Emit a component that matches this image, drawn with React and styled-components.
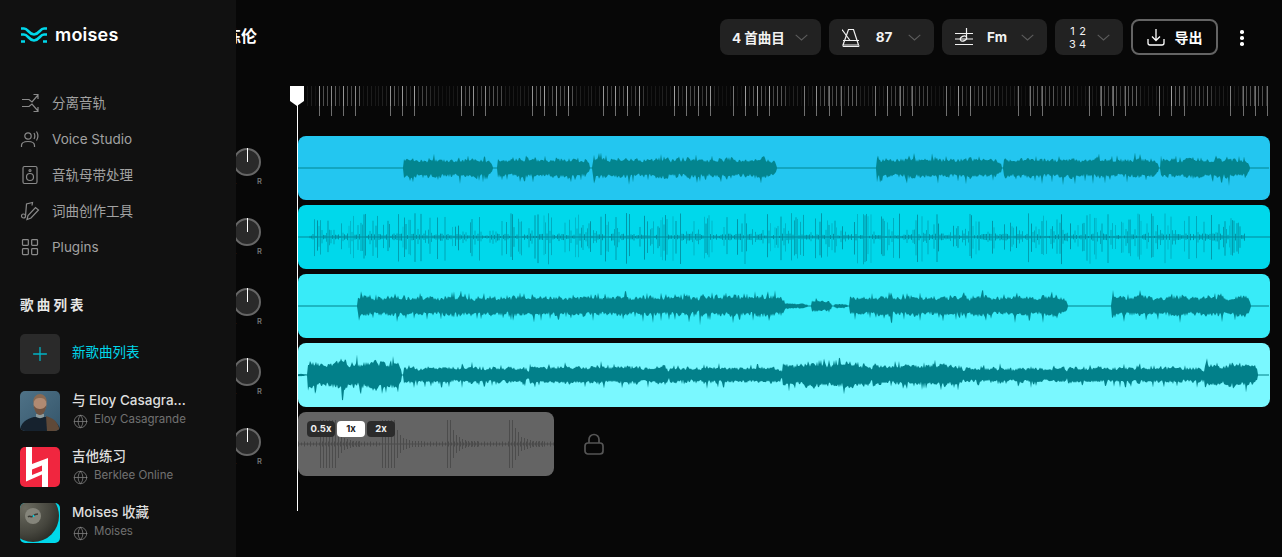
import React, { useMemo } from "react";
import styled, { createGlobalStyle } from "styled-components";
import { Globe, LayoutGrid, Plus } from "lucide-react";

const GlobalStyle = createGlobalStyle`
  html, body { margin: 0; padding: 0; background: #070707; }
  body { font-family: Inter, "Noto Sans CJK SC", "Noto Sans", sans-serif; overflow: hidden; }
  * { box-sizing: border-box; }
`;

/* ---------- layout ---------- */
const Page = styled.div`
  position: relative;
  width: 1282px;
  height: 557px;
  overflow: hidden;
  background: #070707;
  color: #fff;
`;
const Main = styled.main`
  display: flex;
  flex-direction: column;
  height: 100%;
`;
const Header = styled.header`
  display: flex;
  align-items: center;
  height: 74px;
  padding: 0 28px 0 225px;
  flex: none;
`;
const Title = styled.h1`
  margin: -4px auto 0 0;
  font-size: 16px;
  font-weight: 700;
  white-space: nowrap;
`;
const Controls = styled.div`
  display: flex;
  align-items: center;
  gap: 8px;
`;
const Pill = styled.button`
  display: flex;
  align-items: center;
  justify-content: space-between;
  width: ${(p) => p.$w}px;
  height: 36px;
  padding: 0 13px 0 ${(p) => p.$pl || 13}px;
  border: 0;
  border-radius: 8px;
  background: #222222;
  color: #f2f2f2;
  font: 700 13.5px Inter, "Noto Sans CJK SC", sans-serif;
`;
const PillValue = styled.span`
  width: 24px;
  text-align: center;
`;
const BarBeat = styled.span`
  display: grid;
  grid-template-columns: 7px 7px;
  gap: 1px 3px;
  font-size: 11px;
  line-height: 12px;
  font-weight: 400;
  text-align: center;
`;
const ExportButton = styled.button`
  display: flex;
  align-items: center;
  justify-content: center;
  gap: 10px;
  width: 87px;
  height: 36px;
  border: 2px solid #646464;
  border-radius: 8px;
  background: transparent;
  color: #fff;
  font: 700 14px Inter, "Noto Sans CJK SC", sans-serif;
`;
const Kebab = styled.button`
  display: flex;
  flex-direction: column;
  align-items: center;
  gap: 2.5px;
  width: 24px;
  margin-left: 12px;
  padding: 0;
  border: 0;
  background: none;
  transform: translateY(1px);
  span { width: 3.5px; height: 3.5px; border-radius: 50%; background: #fff; }
`;

const Body = styled.div`
  position: relative;
  display: grid;
  grid-template-columns: 298px 972px;
  flex: 1;
`;
const KnobColumn = styled.div`
  display: flex;
  flex-direction: column;
  align-items: flex-end;
  padding: 74px 36px 0 0;
`;
const KnobUnit = styled.div`
  display: flex;
  flex-direction: column;
  align-items: center;
  width: 30px;
  height: 70px;
`;
const KnobDial = styled.div`
  position: relative;
  width: 28px;
  height: 28px;
  border: 2px solid #666;
  border-radius: 50%;
  background: #2a2a2a;
  &::after {
    content: "";
    position: absolute;
    left: 11.5px;
    top: -2px;
    width: 1px;
    height: 14px;
    background: #fff;
  }
`;
const KnobLabels = styled.div`
  display: flex;
  justify-content: space-between;
  width: 30px;
  margin-top: 1px;
  color: #777;
  font-size: 7.5px;
  font-weight: 600;
  line-height: 9px;
`;
const Stage = styled.div`
  display: flex;
  flex-direction: column;
`;
const Ruler = styled.svg`
  display: block;
  width: 972px;
  height: 30px;
  margin-top: 12px;
  margin-bottom: 20px;
`;
const Tracks = styled.div`
  display: flex;
  flex-direction: column;
  gap: 5px;
`;
const Track = styled.div`
  width: 972px;
  height: 64px;
  border-radius: 8px;
  overflow: hidden;
  background: ${(p) => p.$color};
  svg { display: block; }
`;
const ClickRow = styled.div`
  display: flex;
  align-items: center;
  gap: 30px;
`;
const ClickTrack = styled.div`
  position: relative;
  width: 256px;
  height: 64px;
  border-radius: 8px;
  overflow: hidden;
  background: #646464;
  svg { display: block; }
`;
const Speeds = styled.div`
  position: absolute;
  left: 9px;
  top: 9px;
  display: flex;
  gap: 2px;
`;
const Speed = styled.span`
  width: 28px;
  height: 16px;
  border-radius: 4px;
  background: ${(p) => (p.$on ? "#fff" : "#2b2b2b")};
  color: ${(p) => (p.$on ? "#222" : "#f0f0f0")};
  font-size: 9.5px;
  font-weight: 700;
  line-height: 16px;
  text-align: center;
`;
const Playhead = styled.div`
  position: absolute;
  left: 290px;
  top: 12px;
  width: 14px;
  height: 425px;
  &::before {
    content: "";
    position: absolute;
    left: 0;
    top: 0;
    width: 14px;
    height: 20px;
    background: #fff;
    clip-path: polygon(0 0, 100% 0, 100% 75%, 50% 100%, 0 75%);
  }
  &::after {
    content: "";
    position: absolute;
    left: 7px;
    top: 0;
    width: 1px;
    height: 100%;
    background: #fff;
  }
`;

/* ---------- sidebar ---------- */
const Sidebar = styled.aside`
  position: absolute;
  left: 0;
  top: 0;
  display: flex;
  flex-direction: column;
  width: 236px;
  height: 557px;
  padding: 0 0 0 20px;
  background: #111111;
`;
const Logo = styled.div`
  display: flex;
  align-items: center;
  gap: 7px;
  height: 70px;
`;
const LogoWord = styled.span`
  font-size: 18px;
  font-weight: 600;
  letter-spacing: 0.2px;
  color: #fff;
  line-height: 1;
`;
const Nav = styled.nav`
  display: flex;
  flex-direction: column;
  margin-top: 15px;
`;
const NavItem = styled.div`
  display: flex;
  align-items: center;
  gap: 12px;
  height: 36px;
  color: #a2a2a2;
  font-size: 13.5px;
  svg { flex: none; width: 20px; height: 20px; color: #8a8a8a; }
`;
const NavLabel = styled.span`
  margin-top: ${(p) => (p.$cjk ? -2 : 0)}px;
`;
const SectionTitle = styled.h2`
  margin: 31px 0 0;
  height: 18px;
  font-size: 13.5px;
  font-weight: 700;
  line-height: 18px;
  letter-spacing: 3.2px;
  color: #e6e6e6;
`;
const List = styled.div`
  display: flex;
  flex-direction: column;
  gap: 16px;
  margin-top: 20px;
`;
const Row = styled.div`
  display: flex;
  gap: 12px;
  width: 169px;
  height: 40px;
  margin-bottom: ${(p) => (p.$first ? 1 : 0)}px;
`;
const AddTile = styled.div`
  display: flex;
  align-items: center;
  justify-content: center;
  flex: none;
  width: 40px;
  height: 40px;
  border-radius: 5px;
  background: #2a2a2a;
  color: #00b4c6;
`;
const AddLabel = styled.span`
  align-self: center;
  margin-top: -6px;
  color: #00d8eb;
  font-size: 13.5px;
  white-space: nowrap;
`;
const Thumb = styled.svg`
  display: block;
  flex: none;
  width: 40px;
  height: 40px;
  border-radius: 5px;
`;
const RowText = styled.div`
  min-width: 0;
  flex: 1;
`;
const RowTitle = styled.div`
  overflow: hidden;
  white-space: nowrap;
  text-overflow: ellipsis;
  color: #dedede;
  font-size: 13.5px;
  font-weight: 500;
  line-height: 18px;
`;
const RowSub = styled.div`
  display: flex;
  gap: 6px;
  margin-top: 1px;
  color: #717171;
  font-size: 11.5px;
  line-height: 18px;
  white-space: nowrap;
  svg { flex: none; margin: 4px 0 0 1px; color: #888; }
`;

/* ---------- waveforms ---------- */
function rng(seed) {
  let a = seed;
  return () => {
    a |= 0; a = (a + 0x6d2b79f5) | 0;
    let t = Math.imul(a ^ (a >>> 15), 1 | a);
    t = (t + Math.imul(t ^ (t >>> 7), 61 | t)) ^ t;
    return ((t ^ (t >>> 14)) >>> 0) / 4294967296;
  };
}

function densePath(segs, seed) {
  const r = rng(seed);
  const top = [];
  const bot = [];
  let slow = 0.9;
  let next = 0;
  for (let px = 298; px < 1270; px++) {
    const s = segs.find((g) => px >= g[0] && px < g[1]);
    let up = 0.5;
    let dn = 0.5;
    if (s) {
      if (px >= next) {
        slow = 0.78 + r() * 0.22;
        next = px + 2 + Math.floor(r() * 4);
      }
      const beat = 0.93 + 0.07 * Math.cos(((px - s[0]) / 33) * Math.PI * 2);
      const fromEnd = s[1] - px;
      const edge = fromEnd < 5 ? 0.4 + fromEnd * 0.12 : 1;
      const u = 0.62 + r() * 0.38 + (r() < 0.07 ? 0.42 : 0);
      const d = 0.62 + r() * 0.38 + (r() < 0.08 ? 0.6 : 0);
      up = Math.max(0.5, s[2] * slow * beat * u * edge);
      dn = Math.max(0.5, s[2] * slow * beat * d * edge);
    }
    top.push(`${px - 298} ${(32 - up).toFixed(1)}`);
    bot.unshift(`${px - 298} ${(32 + dn).toFixed(1)}`);
  }
  return `M${top.join("L")}L${bot.join("L")}Z`;
}

function DenseWave({ segs, seed, fill }) {
  const d = useMemo(() => densePath(segs, seed), [segs, seed]);
  return (
    <svg width="972" height="64" viewBox="0 0 972 64">
      <path d={d} fill={fill} />
    </svg>
  );
}

function SpikeWave() {
  const lines = useMemo(() => {
    const r = rng(77);
    const out = [];
    for (let px = 310; px < 1246; px += 1.5) {
      const roll = r();
      let a = 1 + r() * 2.5;
      let op = 0.85;
      if (roll < 0.3) { a = 9 + r() * 15; op = 0.35 + r() * 0.55; }
      else if (roll < 0.42) { a = 4 + r() * 5; op = 0.6; }
      const skew = 0.8 + r() * 0.4;
      out.push({ x: px - 298, a, b: a * skew, op });
    }
    return out;
  }, []);
  return (
    <svg width="972" height="64" viewBox="0 0 972 64">
      <line x1="0" x2="972" y1="32" y2="32" stroke="#03899a" strokeWidth="1" />
      {lines.map((l, i) => (
        <line key={i} x1={l.x} x2={l.x} y1={32 - l.a} y2={32 + l.b} stroke="#03899a" strokeWidth="1" opacity={l.op} />
      ))}
    </svg>
  );
}

function ClickWave() {
  const bars = useMemo(() => {
    const out = [];
    for (let x = 0; x < 256; x += 3) out.push({ x, a: x % 6 === 0 ? 2.5 : 1.5, c: "#4a4a4a" });
    const groups = [
      [22, [24, 24, 24, 24, 24, 24, 14, 9, 6, 5, 4, 3, 3, 3]],
      [84, [24, 24, 24, 24, 24, 14, 9, 6, 5, 4, 3, 3, 3, 3]],
      [149, [24, 24, 14, 9, 7, 5, 4, 3, 3, 3, 3]],
      [211, [24, 24, 16, 12, 7, 6, 5, 4, 3, 3, 3, 3]],
    ];
    groups.forEach(([s, amps]) => amps.forEach((a, i) => out.push({ x: s + i * 3, a, c: "#4c4c4c" })));
    return out;
  }, []);
  return (
    <svg width="256" height="64" viewBox="0 0 256 64">
      <line x1="0" x2="256" y1="32" y2="32" stroke="#4a4a4a" strokeWidth="1" />
      {bars.map((b, i) => (
        <line key={i} x1={b.x + 0.5} x2={b.x + 0.5} y1={32 - b.a} y2={32 + b.a} stroke={b.c} strokeWidth="1" />
      ))}
    </svg>
  );
}

const STRONG = [
  319, 331, 343, 355, 390, 402, 414, 461, 473, 485, 532, 544, 556, 568,
  603, 615, 627, 639, 674, 686, 698, 710, 733, 745, 757, 769, 804, 816, 829, 841,
  875, 887, 900, 912, 946, 958, 970, 1018, 1030, 1042, 1089, 1101, 1113, 1125, 1159, 1171, 1184, 1230, 1243, 1255, 1267,
];

function RulerTicks() {
  const ticks = useMemo(() => {
    const out = [];
    const r = rng(9);
    for (let m = 307; m < 1270; m += 71) {
      for (let i = 0; i < 18; i++) {
        const x = m + i * 4;
        if (x >= 1270) break;
        const inner = i >= 3 && i <= 13;
        const op = inner ? 0.12 + r() * 0.24 : 0.04 + r() * 0.07;
        out.push({ x: x - 298 + 0.5, y2: 20, op });
      }
    }
    STRONG.forEach((x) => out.push({ x: x - 298 + 0.5, y2: 30, op: 0.42 }));
    return out;
  }, []);
  return (
    <Ruler viewBox="0 0 972 30">
      {ticks.map((t, i) => (
        <line key={i} x1={t.x} x2={t.x} y1="0" y2={t.y2} stroke="#fff" strokeWidth="1" opacity={t.op} />
      ))}
    </Ruler>
  );
}

const T1 = [[404, 493, 12], [498, 590, 12], [593, 777, 12], [877, 1002, 12], [1004, 1159, 12], [1161, 1250, 12]];
const T3 = [[358, 700, 12], [700, 785, 13], [785, 808, 3.5], [812, 832, 7], [835, 848, 2.5], [850, 1068, 12], [1112, 1251, 12]];
const T4 = [[298, 308, 1.5], [308, 402, 17], [404, 530, 10], [530, 670, 11], [670, 783, 10], [783, 873, 15], [873, 965, 13], [965, 1068, 9], [1068, 1205, 10], [1205, 1258, 14]];

/* ---------- icons ---------- */
const Chevron = () => (
  <svg width="13" height="7" viewBox="0 0 13 7" fill="none" stroke="#5c5c5c" strokeWidth="1.1">
    <path d="M.7.8 6.5 6 12.3.8" />
  </svg>
);
const LogoMark = () => (
  <svg width="28" height="16" viewBox="0 0 28 16" fill="none" stroke="#00d8eb" strokeWidth="2.6">
    <path d="M1 1.500h3C8 1.500 9 7.500 14 7.500s6-6 10-6h3" />
    <path d="M1 7.500h3c4 0 5 6 10 6s6-6 10-6h3" />
    <path d="M1 14.500h4M23 14.500h4" />
  </svg>
);
const SplitIcon = () => (
  <svg viewBox="0 0 20 20" fill="none" stroke="currentColor" strokeWidth="1.2">
    <path d="M2 6.500h7l3 2.500 6-7M13.500 1.500H18V6" />
    <path d="M2 13.500h7l3-2.500 6 7M13.500 18.500H18V14" />
  </svg>
);
const VoiceIcon = () => (
  <svg viewBox="0 0 20 20" fill="none" stroke="currentColor" strokeWidth="1.2">
    <circle cx="8" cy="7" r="3.200" />
    <path d="M1.500 18v-1.500C1.500 14 4 12.500 8 12.500s6.500 1.500 6.500 4V18" />
    <path d="M14 4c1 1.800 1 4.200 0 6M16.500 2.500c1.700 2.700 1.700 6.300 0 9" />
  </svg>
);
const SpeakerIcon = () => (
  <svg viewBox="0 0 20 20" fill="none" stroke="currentColor" strokeWidth="1.2">
    <rect x="3" y="1.500" width="14" height="17" rx="1.500" />
    <circle cx="10" cy="12" r="3.500" />
    <circle cx="10" cy="5.500" r="1" />
  </svg>
);
const WriteIcon = () => (
  <svg viewBox="0 0 20 20" fill="none" stroke="currentColor" strokeWidth="1.2">
    <circle cx="3.500" cy="15" r="2" />
    <path d="M5.500 15 6.500 3l6-1.500-.5 3" />
    <path d="M7 18.500l1-4 7.500-8 3 2.500-7.500 8z" />
  </svg>
);
const MetronomeIcon = () => (
  <svg width="18" height="19" viewBox="0 0 18 19" fill="none" stroke="#f2f2f2" strokeWidth="1.200">
    <path d="M6.500 1.500h5l5 15.500H1z" />
    <path d="M1 12.500h16M1 17.500c0 .8.500 1 1 1h14c.5 0 1-.2 1-1" />
    <path d="M0 1.500 8 12.500" />
  </svg>
);
const KeyIcon = () => (
  <svg width="18" height="18" viewBox="0 0 18 18" fill="none" stroke="#f2f2f2" strokeWidth="1.200">
    <path d="M0 5.500h18M0 11h18M0 16.500h18" />
    <ellipse cx="8.500" cy="10.500" rx="3.300" ry="2.300" transform="rotate(-25 8.500 10.500)" />
    <path d="M11.500 9.500V0" />
  </svg>
);
const ExportIcon = () => (
  <svg width="18" height="18" viewBox="0 0 18 18" fill="none" stroke="#fff" strokeWidth="1.300">
    <path d="M9 1v11M5 8.500l4 4 4-4" />
    <path d="M1 11v4c0 1.200.8 2 2 2h12c1.200 0 2-.8 2-2v-4" />
  </svg>
);
const LockIcon = () => (
  <svg width="20" height="22" viewBox="0 0 20 22" fill="none" stroke="#555" strokeWidth="1.700">
    <rect x="1" y="10" width="18" height="11" rx="3" />
    <path d="M5 10V6.500a5 5 0 0 1 10 0V10" />
  </svg>
);

const EloyThumb = () => (
  <Thumb viewBox="0 0 40 40">
    <defs>
      <linearGradient id="eloybg" x1="0" y1="0" x2="1" y2="1">
        <stop offset="0" stopColor="#4f7287" />
        <stop offset="1" stopColor="#35566b" />
      </linearGradient>
      <filter id="soft"><feGaussianBlur stdDeviation="0.6" /></filter>
    </defs>
    <rect width="40" height="40" fill="url(#eloybg)" />
    <g filter="url(#soft)">
      <path d="M0 41c0-10 7-13 14-15h12c6 2 13 5 15 15z" fill="#12222e" />
      <path d="M26 25c6 2 12 4 14 16H27z" fill="#5f4838" />
      <path d="M16 23h8v3c-2.500 1.500-5.500 1.500-8 0z" fill="#8d9a9c" />
      <ellipse cx="20" cy="13" rx="6.500" ry="9" fill="#b08a72" />
      <path d="M13.500 14c1 6 3 10 6.500 10s5.500-4 6.500-10c-2 3-4 4-6.500 4s-4.500-1-6.500-4z" fill="#6e5342" />
      <path d="M13.500 12c-1-6 3.500-9 6.500-9s7.500 3 6.500 9c-1-4-3-5-6.500-5s-5.500 1-6.500 5z" fill="#8a6a52" />
    </g>
  </Thumb>
);
const BerkleeThumb = () => (
  <Thumb viewBox="0 0 40 40">
    <rect width="40" height="40" fill="#f0263f" />
    <path fillRule="evenodd" fill="#fff" d="M6 0h6v17l16-6v29h-6V27.500L6 34.500zM12 22.500v5.500l10-4v-5.500z" />
  </Thumb>
);
const VinylThumb = () => (
  <Thumb viewBox="0 0 40 40">
    <defs>
      <radialGradient id="vinyl" cx="0.35" cy="0.35" r="0.7">
        <stop offset="0" stopColor="#6b6b60" />
        <stop offset="0.7" stopColor="#45453d" />
        <stop offset="1" stopColor="#2e2e28" />
      </radialGradient>
    </defs>
    <rect width="40" height="40" fill="#00d8eb" />
    <circle cx="13" cy="13" r="26" fill="url(#vinyl)" />
    <circle cx="13" cy="13" r="8" fill="#85857b" />
    <path d="M8 14c2-2 3 1 5-1s3-2 5-2" fill="none" stroke="#3a3a35" strokeWidth="1.500" />
    <circle cx="13.500" cy="13" r="1" fill="#00d8eb" />
  </Thumb>
);

const NAV = [
  [SplitIcon, "分离音轨", true],
  [VoiceIcon, "Voice Studio", false],
  [SpeakerIcon, "音轨母带处理", true],
  [WriteIcon, "词曲创作工具", true],
  [LayoutGrid, "Plugins", false],
];
const PLAYLISTS = [
  [EloyThumb, "与 Eloy Casagrande 一起练习", "Eloy Casagrande"],
  [BerkleeThumb, "吉他练习", "Berklee Online"],
  [VinylThumb, "Moises 收藏", "Moises"],
];

export default function App() {
  return (
    <Page>
      <GlobalStyle />
      <Main>
        <Header>
          <Title>练伦</Title>
          <Controls>
            <Pill $w={101} $pl={12}>4 首曲目<Chevron /></Pill>
            <Pill $w={105}><MetronomeIcon /><PillValue>87</PillValue><Chevron /></Pill>
            <Pill $w={105}><KeyIcon /><PillValue>Fm</PillValue><Chevron /></Pill>
            <Pill $w={68} $pl={14}>
              <BarBeat><span>1</span><span>2</span><span>3</span><span>4</span></BarBeat>
              <Chevron />
            </Pill>
            <ExportButton><ExportIcon />导出</ExportButton>
          </Controls>
          <Kebab aria-label="更多"><span /><span /><span /></Kebab>
        </Header>
        <Body>
          <KnobColumn>
            {[0, 1, 2, 3, 4].map((i) => (
              <KnobUnit key={i}>
                <KnobDial />
                <KnobLabels><span>L</span><span>R</span></KnobLabels>
              </KnobUnit>
            ))}
          </KnobColumn>
          <Stage>
            <RulerTicks />
            <Tracks>
              <Track $color="#23c6f0"><DenseWave segs={T1} seed={11} fill="#03858f" /></Track>
              <Track $color="#00d8eb"><SpikeWave /></Track>
              <Track $color="#38ebf8"><DenseWave segs={T3} seed={23} fill="#03828c" /></Track>
              <Track $color="#7af8ff"><DenseWave segs={T4} seed={37} fill="#02808a" /></Track>
              <ClickRow>
                <ClickTrack>
                  <ClickWave />
                  <Speeds>
                    <Speed>0.5x</Speed>
                    <Speed $on>1x</Speed>
                    <Speed>2x</Speed>
                  </Speeds>
                </ClickTrack>
                <LockIcon />
              </ClickRow>
            </Tracks>
          </Stage>
          <Playhead />
        </Body>
      </Main>
      <Sidebar>
        <Logo><LogoMark /><LogoWord>moises</LogoWord></Logo>
        <Nav>
          {NAV.map(([Icon, label, cjk]) => (
            <NavItem key={label}><Icon strokeWidth={1.5} /><NavLabel $cjk={cjk}>{label}</NavLabel></NavItem>
          ))}
        </Nav>
        <SectionTitle>歌曲列表</SectionTitle>
        <List>
          <Row $first>
            <AddTile><Plus size={22} strokeWidth={1.4} /></AddTile>
            <AddLabel>新歌曲列表</AddLabel>
          </Row>
          {PLAYLISTS.map(([Art, title, sub]) => (
            <Row key={sub}>
              <Art />
              <RowText>
                <RowTitle>{title}</RowTitle>
                <RowSub><Globe size={15} strokeWidth={1.15} />{sub}</RowSub>
              </RowText>
            </Row>
          ))}
        </List>
      </Sidebar>
    </Page>
  );
}
